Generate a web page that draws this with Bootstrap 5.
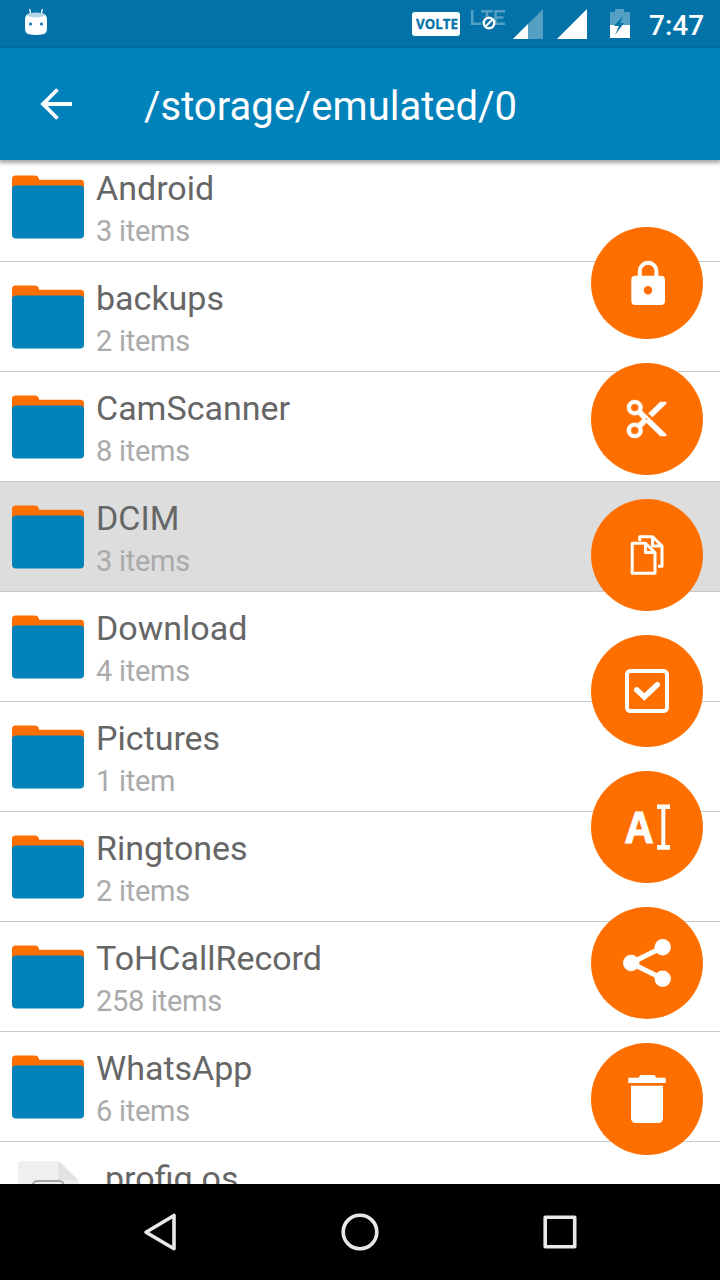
<!DOCTYPE html>
<html lang="en">
<head>
<meta charset="utf-8">
<meta name="viewport" content="width=device-width, initial-scale=1">
<title>File manager</title>
<link href="https://cdn.jsdelivr.net/npm/bootstrap@5.3.0/dist/css/bootstrap.min.css" rel="stylesheet">
<style>
  body { font-family: Roboto, sans-serif; }
  .screen { width: 720px; height: 1280px; }
  .statusbar { height: 48px; background: #0272a8; padding: 0 17px 0 24px; }
  .statusbar svg { display: block; }
  .clock { font-size: 28px; font-weight: 500; line-height: 48px; width: 54px; margin-left: 19px; padding-top: 3px; }
  .appbar { height: 112px; background: #0182bb; padding-left: 40px; z-index: 2; box-shadow: 0 2px 4px 1px rgba(0,0,0,.35); }
  .path-title { font-size: 40px; line-height: 48px; margin-left: 72px; padding-top: 6px; }
  .files { min-height: 0; }
  .file-list { margin-top: -8px; }
  .file-row { height: 110px; padding: 0 12px; border-bottom: 1px solid #c8c8c8; }
  .file-row.selected { background: #ddd; }
  .file-row svg { display: block; margin-top: 23px; }
  .file-row .doc-icon { margin-top: 19px; }
  .file-name { font-size: 34px; line-height: 40px; margin-top: 16px; color: #666; }
  .file-info { font-size: 29px; letter-spacing: -.28px; line-height: 34px; margin-top: 6px; color: #aaa; }
  .fabs { top: 67px; right: 17px; gap: 24px; z-index: 1; }
  .fab { width: 112px; height: 112px; background: #ff6f00; color: #fff; }
  .navkeys { height: 96px; background: #000; }
</style>
</head>
<body>
<svg width="0" height="0" class="position-absolute">
  <symbol id="folder" viewBox="0 0 72 66">
    <path d="M0 12V4a3.500 3.500 0 0 1 3.500-3.500H23a4 4 0 0 1 4 4.300H68.500a3.500 3.500 0 0 1 3.500 3.500V16H0Z" fill="#ff6f00"/>
    <rect y="10.500" width="72" height="53" rx="4" fill="#0182bb"/>
  </symbol>
</svg>
<div class="screen d-flex flex-column overflow-hidden position-relative bg-white">
  <header class="statusbar d-flex align-items-center text-white flex-shrink-0">
    <svg width="24" height="48" viewBox="24 0 24 48" fill="#fff">
      <path d="M29.500 9l1.300 5M42.500 9l-1.300 5" stroke="#fff" stroke-width="1.300"/>
      <path d="M25 20q0-5 3-6 8-2 16 0 3 1 3 6v8q0 5-3 6-8 2-16 0-3-1-3-6z"/>
      <ellipse cx="36" cy="15" rx="9" ry="2.500" fill="#b3d5e5"/>
      <circle cx="30.500" cy="24" r="1.500" fill="#0272a8"/><circle cx="41.500" cy="24" r="1.500" fill="#0272a8"/>
    </svg>
    <svg class="ms-auto" width="218" height="48" viewBox="412 0 218 48">
      <rect x="412" y="12" width="48" height="24" rx="3" fill="#fff"/>
      <text x="416" y="29" font-family="Open Sans, sans-serif" font-weight="700" font-size="14.500" textLength="42" lengthAdjust="spacingAndGlyphs" fill="#0272a8" stroke="#0272a8" stroke-width=".3">VOLTE</text>
      <path d="M472.200 10v13.800H481M481 11.200h12M487 11v13.800M505 11.200h-9.500v12.600h9.500M495.500 17.500h8" fill="none" stroke="#549fc4" stroke-width="2.600"/>
      <circle cx="489" cy="23" r="6.500" fill="#fff"/><circle cx="489" cy="23" r="4" fill="#0272a8"/>
      <path d="M486 26l6-6" stroke="#fff" stroke-width="2"/>
      <path d="M513 39l30-30v30z" fill="#549fc4"/><path d="M513 39l15-15v15z" fill="#fff"/>
      <path d="M557 39l30-30v30z" fill="#fff"/>
      <path d="M610 12h5V9h9v3h6v13h-20z" fill="#549fc4"/><path d="M610 25h20v13h-20z" fill="#fff"/>
      <path d="M623 16l-9 10h5l-4 9 9-12h-4z" fill="#0272a8"/>
    </svg>
    <div class="clock text-nowrap">7:47</div>
  </header>
  <nav class="appbar d-flex align-items-center text-white flex-shrink-0 position-relative">
    <svg width="32" height="32" viewBox="0 0 32 32" fill="none" stroke="#fff" stroke-width="3.800"><path d="M32 16H3M17.500 1.500L3 16l14.500 14.500"/></svg>
    <div class="path-title text-nowrap">/storage/emulated/0</div>
  </nav>
  <main class="files flex-grow-1 overflow-hidden position-relative">
    <div class="file-list d-flex flex-column">
      <div class="file-row d-flex flex-shrink-0"><svg width="72" height="66"><use href="#folder"/></svg><div class="ms-2 ps-1"><div class="file-name">Android</div><div class="file-info">3 items</div></div></div>
      <div class="file-row d-flex flex-shrink-0"><svg width="72" height="66"><use href="#folder"/></svg><div class="ms-2 ps-1"><div class="file-name">backups</div><div class="file-info">2 items</div></div></div>
      <div class="file-row d-flex flex-shrink-0"><svg width="72" height="66"><use href="#folder"/></svg><div class="ms-2 ps-1"><div class="file-name">CamScanner</div><div class="file-info">8 items</div></div></div>
      <div class="file-row selected d-flex flex-shrink-0"><svg width="72" height="66"><use href="#folder"/></svg><div class="ms-2 ps-1"><div class="file-name">DCIM</div><div class="file-info">3 items</div></div></div>
      <div class="file-row d-flex flex-shrink-0"><svg width="72" height="66"><use href="#folder"/></svg><div class="ms-2 ps-1"><div class="file-name">Download</div><div class="file-info">4 items</div></div></div>
      <div class="file-row d-flex flex-shrink-0"><svg width="72" height="66"><use href="#folder"/></svg><div class="ms-2 ps-1"><div class="file-name">Pictures</div><div class="file-info">1 item</div></div></div>
      <div class="file-row d-flex flex-shrink-0"><svg width="72" height="66"><use href="#folder"/></svg><div class="ms-2 ps-1"><div class="file-name">Ringtones</div><div class="file-info">2 items</div></div></div>
      <div class="file-row d-flex flex-shrink-0"><svg width="72" height="66"><use href="#folder"/></svg><div class="ms-2 ps-1"><div class="file-name">ToHCallRecord</div><div class="file-info">258 items</div></div></div>
      <div class="file-row d-flex flex-shrink-0"><svg width="72" height="66"><use href="#folder"/></svg><div class="ms-2 ps-1"><div class="file-name">WhatsApp</div><div class="file-info">6 items</div></div></div>
      <div class="file-row d-flex flex-shrink-0">
        <svg class="doc-icon" width="72" height="76" viewBox="12 1161 72 76"><path d="M18 1165q0-4 4-4H59l19.500 19.500V1237H18z" fill="#efefef"/><path d="M58.500 1161v16.500q0 3 3 3h17z" fill="#e2e2e2"/><rect x="32.500" y="1181" width="31.500" height="26" rx="5" fill="none" stroke="#a5a5a5" stroke-width="1.800"/></svg>
        <div class="ms-2 ps-1"><div class="file-name">.profig.os</div></div>
      </div>
    </div>
    <div class="fabs position-absolute d-flex flex-column">
      <div class="fab rounded-circle"><svg viewBox="0 0 112 112"><path d="M48.800 50v-6a8.300 8.300 0 0 1 16.600 0v6" fill="none" stroke="#fff" stroke-width="4"/><rect x="40.300" y="48.700" width="33.700" height="29.300" rx="4" fill="#fff"/><circle cx="57" cy="63.300" r="4.200" fill="#ff6f00"/></svg></div>
      <div class="fab rounded-circle"><svg viewBox="0 0 112 112"><path transform="translate(32 33.200) scale(1.960 1.900)" fill="#fff" stroke="#fff" stroke-width=".2" fill-rule="evenodd" d="M9.640 7.640c.23-.5.36-1.050.36-1.640 0-2.210-1.790-4-4-4S2 3.790 2 6s1.790 4 4 4c.59 0 1.140-.13 1.640-.36L10 12l-2.360 2.360C7.140 14.130 6.590 14 6 14c-2.210 0-4 1.790-4 4s1.790 4 4 4 4-1.790 4-4c0-.59-.13-1.140-.36-1.640L12 14l7 7h3v-1L9.640 7.640zM6 8a2 2 0 1 1 0-4 2 2 0 0 1 0 4zm0 12a2 2 0 1 1 0-4 2 2 0 0 1 0 4zm6-7.500a.5.5 0 1 1 0-1 .5.5 0 0 1 0 1zM19 3l-6 6 2 2 7-7V3z"/></svg></div>
      <div class="fab rounded-circle"><svg viewBox="0 0 112 112" fill="none" stroke="#fff" stroke-width="3" stroke-linejoin="round"><path d="M41.200 44.200H54.500L64 53.600V74.200H41.200zM54.500 44.200V53.600H63.900M48.700 42V37.700H61.500L71 47V67.300H67M61.500 37.700V47H71"/></svg></div>
      <div class="fab rounded-circle"><svg viewBox="0 0 112 112" fill="none" stroke="#fff"><rect x="36" y="35.900" width="40" height="40.200" rx="3.500" stroke-width="4"/><path d="M45.700 54.800l7.600 7.200L66.300 49.700" stroke-width="5.500" stroke-linecap="round"/></svg></div>
      <div class="fab rounded-circle"><svg viewBox="0 0 112 112" fill="#fff"><text x="33.600" y="71.500" font-family="Liberation Sans, sans-serif" font-weight="700" font-size="45" textLength="29" lengthAdjust="spacingAndGlyphs" stroke="#fff" stroke-width="1.200">A</text><path d="M66 33.500h13v4.500h-4.700v36h4.700v4.700H66V74h4.300V38H66z"/></svg></div>
      <div class="fab rounded-circle"><svg viewBox="0 0 112 112" fill="#fff"><path d="M71.700 40.300L40 56l31.700 15.700" fill="none" stroke="#fff" stroke-width="5"/><circle cx="40.200" cy="56" r="8.200"/><circle cx="71.700" cy="40.300" r="8.200"/><circle cx="71.700" cy="71.700" r="8.200"/></svg></div>
      <div class="fab rounded-circle"><svg viewBox="0 0 112 112" fill="#fff"><path d="M37.300 34.700h10L49.700 32h13.600l2.400 2.700h9V40H37.300zM40 42.700h32V75q0 5-5 5H45q-5 0-5-5z"/></svg></div>
    </div>
  </main>
  <footer class="navkeys flex-shrink-0">
    <svg class="d-block" width="720" height="96" viewBox="0 1184 720 96" fill="none" stroke="#e8e8e8" stroke-width="3.600" stroke-linejoin="round"><path d="M174 1215.500v33.200L146 1232.200z"/><circle cx="360" cy="1232" r="16.800"/><rect x="545.200" y="1217.200" width="29.500" height="29.500"/></svg>
  </footer>
</div>
<script src="https://cdn.jsdelivr.net/npm/bootstrap@5.3.0/dist/js/bootstrap.bundle.min.js"></script>
</body>
</html>
